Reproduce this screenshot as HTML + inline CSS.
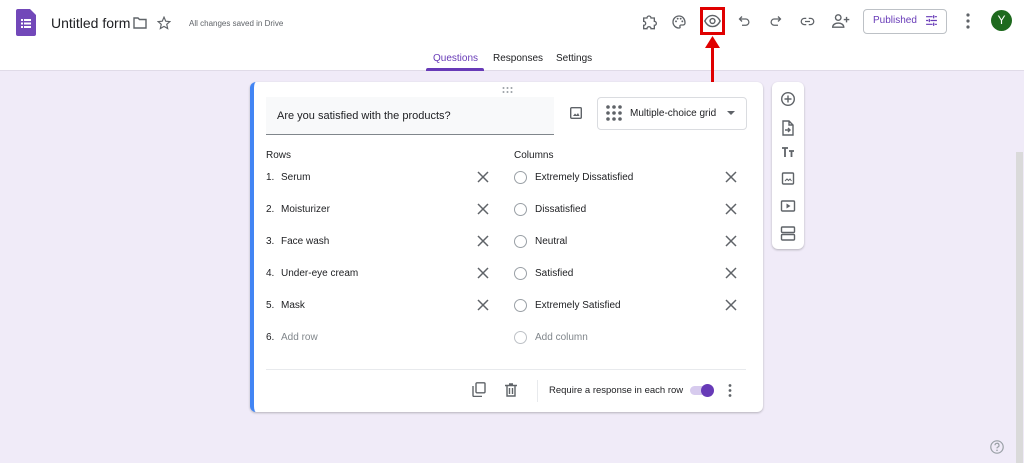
<!DOCTYPE html>
<html><head><meta charset="utf-8"><style>
*{margin:0;padding:0;box-sizing:border-box}
body{width:1024px;height:463px;overflow:hidden;background:#f0ebf8;font-family:"Liberation Sans",Arial,sans-serif;color:#202124;position:relative}
.a{position:absolute}
header{position:absolute;left:0;top:0;width:1024px;height:71px;background:#fff;border-bottom:1px solid #e0dbe8}
svg{display:block}
.t{font-size:10px;color:#202124}
.g{color:#80868b}
.r{position:absolute;width:13px;height:13px;border:1.5px solid #9aa0a6;border-radius:50%}
</style></head><body>
<header>
  <svg class="a" style="left:16px;top:9px" width="20" height="27" viewBox="0 0 20 27"><path d="M2 0h12l6 6v19a2 2 0 0 1-2 2H2a2 2 0 0 1-2-2V2a2 2 0 0 1 2-2z" fill="#7248b9"/><g fill="#fff"><rect x="5" y="10" width="2" height="2"/><rect x="8" y="10" width="7" height="2"/><rect x="5" y="13.5" width="2" height="2"/><rect x="8" y="13.5" width="7" height="2"/><rect x="5" y="17" width="2" height="2"/><rect x="8" y="17" width="7" height="2"/></g></svg>
  <div class="a" style="left:51px;top:15px;font-size:14px;color:#202124">Untitled form</div>
  <svg class="a" style="left:133px;top:17px" width="14" height="12" viewBox="0 0 14 12"><path d="M1 1h4l1.5 1.5H13V11H1z" fill="none" stroke="#5f6368" stroke-width="1.4"/></svg>
  <svg class="a" style="left:157px;top:16px" width="14" height="14" viewBox="0 0 24 24"><path d="M12 2l3 7 7 .6-5.3 4.7 1.6 7.2L12 17.8 5.7 21.5l1.6-7.2L2 9.6 9 9z" fill="none" stroke="#5f6368" stroke-width="2"/></svg>
  <div class="a" style="left:189px;top:19px;font-size:8px;color:#5f6368">All changes saved in Drive</div>
  <svg class="a" style="left:641px;top:14px" width="16" height="16" viewBox="0 0 24 24"><path d="M4 6h5a3 3 0 0 1 6 0h5v5a3 3 0 0 1 0 6v5h-5a3 3 0 0 0-6 0H4v-5a3 3 0 0 0 0-6z" fill="none" stroke="#5f6368" stroke-width="2"/></svg>
  <svg class="a" style="left:671px;top:14px" width="16" height="16" viewBox="0 0 24 24"><path d="M12 3a9 9 0 0 0 0 18c1.5 0 2-1 1.5-2-.6-1.2.2-2.5 1.5-2.5H18a3 3 0 0 0 3-3C21 7 17 3 12 3z" fill="none" stroke="#5f6368" stroke-width="2"/><circle cx="7.5" cy="11" r="1.4" fill="#5f6368"/><circle cx="10" cy="7" r="1.4" fill="#5f6368"/><circle cx="14.5" cy="7" r="1.4" fill="#5f6368"/><circle cx="17" cy="11" r="1.4" fill="#5f6368"/></svg>
  <div class="a" style="left:700px;top:7px;width:25px;height:28px;border:3px solid #e00000"></div>
  <svg class="a" style="left:704px;top:14px" width="17" height="14" viewBox="0 0 24 20"><path d="M1 10C4 4 8 2 12 2s8 2 11 8c-3 6-7 8-11 8S4 16 1 10z" fill="none" stroke="#5f6368" stroke-width="2"/><circle cx="12" cy="10" r="3.5" fill="none" stroke="#5f6368" stroke-width="2"/></svg>
  <svg class="a" style="left:737px;top:14px" width="15" height="15" viewBox="0 0 24 24"><path d="M8 4L4 8l4 4M4 8h10a5 5 0 0 1 0 10h-6" fill="none" stroke="#5f6368" stroke-width="2"/></svg>
  <svg class="a" style="left:768px;top:14px" width="15" height="15" viewBox="0 0 24 24"><path d="M16 4l4 4-4 4M20 8H10a5 5 0 0 0 0 10h6" fill="none" stroke="#5f6368" stroke-width="2"/></svg>
  <svg class="a" style="left:799px;top:14px" width="17" height="15" viewBox="0 0 24 24"><path d="M10 7H7a5 5 0 0 0 0 10h3M14 7h3a5 5 0 0 1 0 10h-3M8 12h8" fill="none" stroke="#5f6368" stroke-width="2"/></svg>
  <svg class="a" style="left:832px;top:13px" width="18" height="16" viewBox="0 0 26 22"><circle cx="9" cy="6" r="4" fill="none" stroke="#5f6368" stroke-width="2"/><path d="M1 20c0-4 4-6 8-6s8 2 8 6z" fill="none" stroke="#5f6368" stroke-width="2"/><path d="M21 5v8M17 9h8" stroke="#5f6368" stroke-width="2"/></svg>
  <div class="a" style="left:863px;top:9px;width:84px;height:25px;border:1px solid #bdc1c6;border-radius:4px"></div>
  <div class="a" style="left:873px;top:15px;font-size:10px;color:#673ab7">Published</div>
  <svg class="a" style="left:925px;top:14px" width="13" height="13" viewBox="0 0 24 24"><path d="M2 5h12M18 5h4M2 12h4M10 12h12M2 19h12M18 19h4M16 2v6M8 9v6M16 16v6" stroke="#673ab7" stroke-width="2.2"/></svg>
  <svg class="a" style="left:966px;top:13px" width="4" height="16" viewBox="0 0 4 16"><circle cx="2" cy="2" r="1.6" fill="#5f6368"/><circle cx="2" cy="8" r="1.6" fill="#5f6368"/><circle cx="2" cy="14" r="1.6" fill="#5f6368"/></svg>
  <div class="a" style="left:991px;top:10px;width:21px;height:21px;border-radius:50%;background:#1e6a1e;color:#fff;font-size:12px;text-align:center;line-height:21px">Y</div>
  <div class="a" style="left:433px;top:53px;font-size:10px;color:#673ab7">Questions</div>
  <div class="a" style="left:426px;top:68px;width:58px;height:3px;background:#673ab7;border-radius:2px 2px 0 0"></div>
  <div class="a" style="left:493px;top:53px;font-size:10px;color:#202124">Responses</div>
  <div class="a" style="left:556px;top:53px;font-size:10px;color:#202124">Settings</div>
</header>
<div class="a" style="left:711px;top:44px;width:3px;height:68px;background:#e00000"></div>
<svg class="a" style="left:705px;top:36px" width="15" height="12"><path d="M7.5 0L15 12H0z" fill="#e00000"/></svg>
<div class="a" style="left:250px;top:82px;width:513px;height:330px;background:#fff;border-radius:6px;box-shadow:0 1px 2px rgba(0,0,0,.25);border-left:4px solid #4285f4;overflow:hidden"></div>
<svg class="a" style="left:502px;top:87px" width="11" height="6"><g fill="#9aa0a6"><circle cx="1.5" cy="1" r="1"/><circle cx="5.5" cy="1" r="1"/><circle cx="9.5" cy="1" r="1"/><circle cx="1.5" cy="5" r="1"/><circle cx="5.5" cy="5" r="1"/><circle cx="9.5" cy="5" r="1"/></g></svg>
<div class="a" style="left:266px;top:97px;width:288px;height:38px;background:#f8f9fa;border-bottom:1px solid #80868b"></div>
<div class="a" style="left:277px;top:110px;font-size:11px;color:#202124">Are you satisfied with the products?</div>
<svg class="a" style="left:570px;top:107px" width="12" height="12" viewBox="0 0 12 12"><rect x="0.7" y="0.7" width="10.6" height="10.6" rx="1" fill="none" stroke="#5f6368" stroke-width="1.4"/><path d="M3 9l2-2.5 1.5 1.5L8 6l1.5 3z" fill="#5f6368"/></svg>
<div class="a" style="left:597px;top:97px;width:150px;height:33px;border:1px solid #dadce0;border-radius:4px"></div>
<svg class="a" style="left:606px;top:105px" width="16" height="16"><g fill="#5f6368"><circle cx="2" cy="2" r="1.8"/><circle cx="8" cy="2" r="1.8"/><circle cx="14" cy="2" r="1.8"/><circle cx="2" cy="8" r="1.8"/><circle cx="8" cy="8" r="1.8"/><circle cx="14" cy="8" r="1.8"/><circle cx="2" cy="14" r="1.8"/><circle cx="8" cy="14" r="1.8"/><circle cx="14" cy="14" r="1.8"/></g></svg>
<div class="a" style="left:630px;top:108px;font-size:10px">Multiple-choice grid</div>
<svg class="a" style="left:727px;top:111px" width="8" height="4"><path d="M0 0h8L4 4z" fill="#5f6368"/></svg>
<div class="a" style="left:266px;top:150px;font-size:10px">Rows</div>
<div class="a" style="left:514px;top:150px;font-size:10px">Columns</div>

<div class="a t" style="left:266px;top:172px">1.</div><div class="a t" style="left:281px;top:172px">Serum</div>
<div class="a t" style="left:266px;top:204px">2.</div><div class="a t" style="left:281px;top:204px">Moisturizer</div>
<div class="a t" style="left:266px;top:236px">3.</div><div class="a t" style="left:281px;top:236px">Face wash</div>
<div class="a t" style="left:266px;top:268px">4.</div><div class="a t" style="left:281px;top:268px">Under-eye cream</div>
<div class="a t" style="left:266px;top:300px">5.</div><div class="a t" style="left:281px;top:300px">Mask</div>
<div class="a t" style="left:266px;top:332px">6.</div><div class="a t g" style="left:281px;top:332px">Add row</div>

<div class="r" style="left:514px;top:171px"></div><div class="a t" style="left:535px;top:172px">Extremely Dissatisfied</div>
<div class="r" style="left:514px;top:203px"></div><div class="a t" style="left:535px;top:204px">Dissatisfied</div>
<div class="r" style="left:514px;top:235px"></div><div class="a t" style="left:535px;top:236px">Neutral</div>
<div class="r" style="left:514px;top:267px"></div><div class="a t" style="left:535px;top:268px">Satisfied</div>
<div class="r" style="left:514px;top:299px"></div><div class="a t" style="left:535px;top:300px">Extremely Satisfied</div>
<div class="r" style="left:514px;top:331px;border-color:#bdc1c6"></div><div class="a t g" style="left:535px;top:332px">Add column</div>

<svg class="a" style="left:0;top:0" width="1024" height="463"><g stroke="#5f6368" stroke-width="1.5">
<path d="M478 172l10 10M488 172l-10 10M478 204l10 10M488 204l-10 10M478 236l10 10M488 236l-10 10M478 268l10 10M488 268l-10 10M478 300l10 10M488 300l-10 10"/>
<path d="M726 172l10 10M736 172l-10 10M726 204l10 10M736 204l-10 10M726 236l10 10M736 236l-10 10M726 268l10 10M736 268l-10 10M726 300l10 10M736 300l-10 10"/>
</g></svg>
<div class="a" style="left:266px;top:369px;width:480px;height:1px;background:#e8eaed"></div>
<svg class="a" style="left:472px;top:382px" width="14" height="15" viewBox="0 0 14 15"><rect x="4" y="0.8" width="9" height="10" rx="1" fill="none" stroke="#5f6368" stroke-width="1.4"/><path d="M1 4v9.5a1 1 0 0 0 1 1h8" fill="none" stroke="#5f6368" stroke-width="1.4"/></svg>
<svg class="a" style="left:505px;top:383px" width="12" height="14" viewBox="0 0 12 14"><path d="M0 2.5h12M4 1h4M2 2.5v10.5h8V2.5M4.5 5v6M7.5 5v6" fill="none" stroke="#5f6368" stroke-width="1.4"/></svg>
<div class="a" style="left:537px;top:380px;width:1px;height:22px;background:#e8eaed"></div>
<div class="a" style="left:549px;top:385px;font-size:9.5px">Require a response in each row</div>
<div class="a" style="left:690px;top:386px;width:24px;height:9px;border-radius:5px;background:#d7cbee"></div>
<div class="a" style="left:701px;top:384px;width:13px;height:13px;border-radius:50%;background:#673ab7"></div>
<svg class="a" style="left:728px;top:384px" width="4" height="13"><circle cx="2" cy="1.5" r="1.4" fill="#5f6368"/><circle cx="2" cy="6.5" r="1.4" fill="#5f6368"/><circle cx="2" cy="11.5" r="1.4" fill="#5f6368"/></svg>
<div class="a" style="left:772px;top:82px;width:32px;height:167px;background:#fff;border-radius:6px;box-shadow:0 1px 2px rgba(0,0,0,.25)"></div>
<svg class="a" style="left:780px;top:91px" width="16" height="150" viewBox="0 0 16 150" fill="none" stroke="#5f6368" stroke-width="1.4">
<circle cx="8" cy="8" r="6.3"/><path d="M8 4.5v7M4.5 8h7"/>
<path d="M3 30h6l4 4v10H3z M9 30v4h4 M5 39h5M8 37l2 2-2 2"/>
<path d="M2 57h6M5 57v9M9 60h5M11.5 60v6" stroke-width="1.8"/>
<rect x="2.5" y="82" width="11" height="11" rx="1"/><path d="M5 90l2-2 1.5 1.5L10 88l1.5 2" stroke-width="1"/>
<rect x="1.5" y="110" width="13" height="10" rx="1"/><path d="M6.5 112.5v5l4-2.5z" fill="#5f6368" stroke="none"/>
<rect x="1.5" y="136" width="13" height="5.5" rx="1"/><rect x="1.5" y="143.5" width="13" height="5.5" rx="1"/>
</svg>
<div class="a" style="left:1016px;top:152px;width:7px;height:311px;background:#dadada"></div>
<svg class="a" style="left:990px;top:440px" width="14" height="14" viewBox="0 0 14 14"><circle cx="7" cy="7" r="6.2" fill="none" stroke="#9aa0a6" stroke-width="1.2"/><path d="M5 5.3a2 2 0 1 1 2.6 1.9c-.5.2-.6.6-.6 1.2" fill="none" stroke="#9aa0a6" stroke-width="1.2"/><circle cx="7" cy="10.3" r=".8" fill="#9aa0a6"/></svg>
</body></html>
